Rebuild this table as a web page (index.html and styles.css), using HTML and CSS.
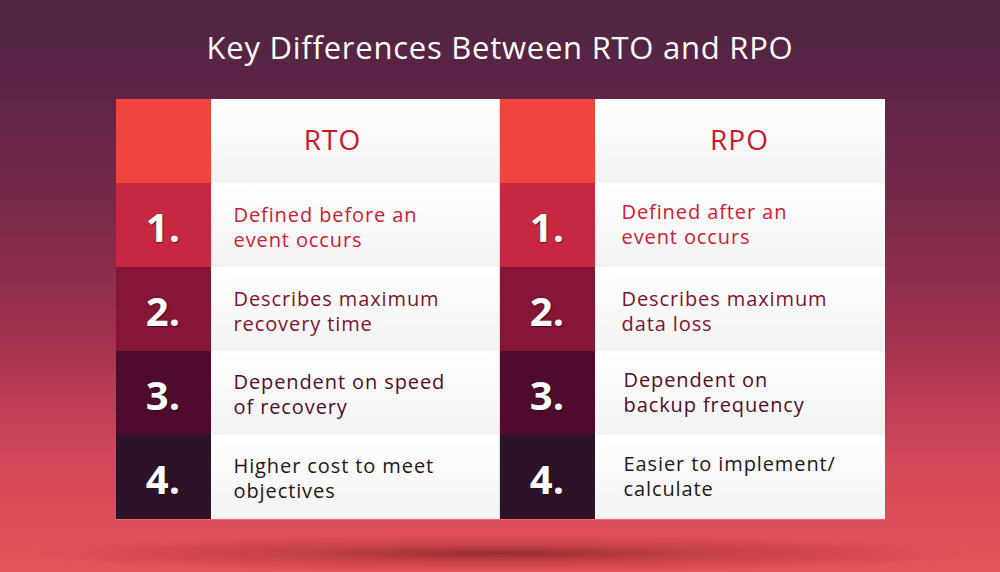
FILE: index.html
```html
<!DOCTYPE html>
<html lang="en">
<head>
<meta charset="utf-8">
<title>Key Differences Between RTO and RPO</title>
<link rel="stylesheet" href="styles.css">
</head>
<body>
<main class="page">
  <h1 class="title">Key Differences Between RTO and RPO</h1>
  <section class="table">
    <div class="cell num head"></div>
    <div class="cell txt headtxt head-l split">RTO</div>
    <div class="cell num head"></div>
    <div class="cell txt headtxt">RPO</div>

    <div class="cell num r1">1.</div>
    <div class="cell txt t1 split">Defined before an<br>event occurs</div>
    <div class="cell num r1">1.</div>
    <div class="cell txt t1 rt up">Defined after an<br>event occurs</div>

    <div class="cell num r2">2.</div>
    <div class="cell txt t2 split">Describes maximum<br>recovery time</div>
    <div class="cell num r2">2.</div>
    <div class="cell txt t2 rt">Describes maximum<br>data loss</div>

    <div class="cell num r3">3.</div>
    <div class="cell txt t3 split">Dependent on speed<br>of recovery</div>
    <div class="cell num r3">3.</div>
    <div class="cell txt t3 in up">Dependent on<br>backup frequency</div>

    <div class="cell num r4">4.</div>
    <div class="cell txt t4 split">Higher cost to meet<br>objectives</div>
    <div class="cell num r4">4.</div>
    <div class="cell txt t4 in up">Easier to implement/<br>calculate</div>
  </section>
  <div class="shadow"></div>
</main>
</body>
</html>
```

FILE: styles.css
```css
* { box-sizing: border-box; margin: 0; padding: 0; }

html, body {
  width: 1000px;
  height: 572px;
  overflow: hidden;
}

body {
  font-family: "Open Sans", "Noto Sans", sans-serif;
  background: linear-gradient(180deg, #4d2641 0%, #5c2446 15%, #7e2a4a 40%, #a8344f 62%, #d2485a 80%, #e55457 100%);
}

.page {
  display: flex;
  flex-direction: column;
  align-items: center;
  height: 572px;
}

.title {
  margin-top: 25px;
  height: 44px;
  font-size: 31px;
  line-height: 44px;
  font-weight: 500;
  color: #ffffff;
  letter-spacing: 0.75px;
}

.table {
  margin-top: 30px;
  display: grid;
  grid-template-columns: 95px 289px 95px 290px;
  grid-auto-rows: 84px;
  width: 769px;
  box-shadow: 0 1px 0 #ee6a70;
}

.cell {
  display: flex;
  align-items: center;
}

.num {
  justify-content: center;
  color: #ffffff;
  font-size: 40px;
  font-weight: 700;
  padding-top: 2px;
  text-shadow: 0 0 1px rgba(40, 0, 10, 0.9), 1px 1px 1px rgba(40, 0, 10, 0.5);
}

.head { background: #f0453f; }
.r1 { background: #c52840; }
.r2 { background: #851635; }
.r3 { background: #4e0b2e; }
.r4 { background: #2d1329; }

.txt {
  background: linear-gradient(180deg, #ffffff 0%, #f3f3f3 100%);
  padding-left: 23px;
  font-size: 20px;
  line-height: 25px;
  font-weight: 500;
  letter-spacing: 0.9px;
}

.split { border-right: 1px solid #dcdcdc; }

.headtxt {
  justify-content: center;
  padding-left: 0;
  font-size: 28px;
  letter-spacing: 1px;
  color: #c8192f;
  padding-bottom: 4px;
}

.head-l { padding-right: 44px; }

.t1 { color: #cc1c36; padding-top: 3px; }
.t2 { color: #7b1431; padding-top: 3px; }
.t3 { color: #4f0d2e; padding-top: 1px; }
.t4 { color: #1f1520; padding-top: 1px; }

.rt { padding-left: 27px; }
.up { padding-top: 0; padding-bottom: 2px; }
.in { padding-left: 29px; }

.shadow {
  margin-top: 16px;
  width: 960px;
  height: 40px;
  background: radial-gradient(ellipse 50% 50% at 50% 50%, rgba(100, 18, 28, 0.6) 0%, rgba(140, 30, 40, 0.32) 45%, rgba(200, 60, 70, 0) 100%);
}
```
